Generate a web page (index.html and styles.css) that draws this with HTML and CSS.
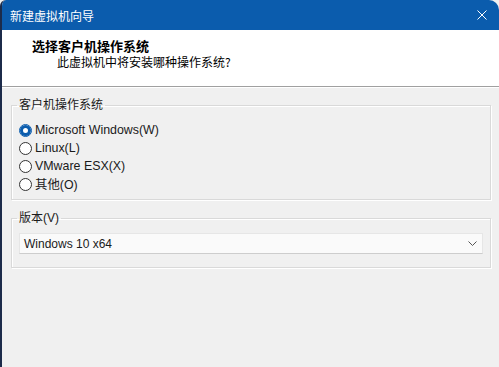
FILE: index.html
```html
<!DOCTYPE html>
<html lang="zh-CN">
<head>
    <meta charset="UTF-8">
    <meta name="viewport" content="width=device-width, initial-scale=1.0">
    <title>新建虚拟机向导</title>
    <link rel="stylesheet" href="styles.css">
</head>
<body>
    <div class="window">
        <div class="titlebar">
            <span class="title">新建虚拟机向导</span>
            <svg class="close" width="10" height="10" viewBox="0 0 10 10">
                <path d="M0.5 0.5 L9.5 9.5 M9.5 0.5 L0.5 9.5" stroke="#fff" stroke-width="1" fill="none"/>
            </svg>
        </div>

        <div class="header">
            <div class="header-title">选择客户机操作系统</div>
            <div class="header-sub">此虚拟机中将安装哪种操作系统?</div>
        </div>

        <div class="content">
            <fieldset class="group">
                <legend>客户机操作系统</legend>
                <label class="radio-row">
                    <span class="radio checked"></span>
                    <span>Microsoft Windows(W)</span>
                </label>
                <label class="radio-row">
                    <span class="radio"></span>
                    <span>Linux(L)</span>
                </label>
                <label class="radio-row">
                    <span class="radio"></span>
                    <span>VMware ESX(X)</span>
                </label>
                <label class="radio-row">
                    <span class="radio"></span>
                    <span>其他(O)</span>
                </label>
            </fieldset>

            <fieldset class="group version">
                <legend>版本(V)</legend>
                <div class="select">
                    <span>Windows 10 x64</span>
                    <svg width="9" height="5" viewBox="0 0 9 5">
                        <polyline points="0.5,0.5 4.5,4.5 8.5,0.5" stroke="#555" stroke-width="1" fill="none"/>
                    </svg>
                </div>
            </fieldset>
        </div>
    </div>
</body>
</html>
```

FILE: styles.css
```css
html, body {
    margin: 0;
    height: 100%;
}
body {
    font-family: "Liberation Sans", "Noto Sans CJK SC", sans-serif;
    font-size: 12px;
    color: #1a1a1a;
    background-color: #f0f0f0;
    overflow: hidden;
}
.window {
    height: 367px;
    border-left: 2px solid #1c2b4a;
    border-radius: 6px 10px 0 0;
    overflow: hidden;
    background-color: #f0f0f0;
    box-sizing: border-box;
}
.titlebar {
    height: 30px;
    background-color: #0b5cad;
    display: flex;
    align-items: center;
    justify-content: space-between;
    padding: 0 12px 0 8px;
}
.title {
    color: #fff;
    font-family: "Noto Sans CJK SC", sans-serif;
    font-size: 12px;
}
.header {
    height: 57px;
    background-color: #fff;
    border-bottom: 1px solid #a0a0a0;
    box-shadow: 0 1px 0 #fff;
    padding: 7px 0 0 30px;
    box-sizing: border-box;
}
.header-title {
    font-family: "Noto Sans CJK SC", sans-serif;
    font-weight: bold;
    font-size: 13px;
    line-height: 17px;
    color: #000;
}
.header-sub {
    font-family: "Noto Sans CJK SC", sans-serif;
    font-size: 12px;
    line-height: 16px;
    margin-left: 25px;
    color: #000;
}
.content {
    padding: 10px 8px 0 9px;
}
.group {
    margin: 0 0 10px 0;
    padding: 8px 7px 6px 7px;
    border: 1px solid #d9d9d9;
    box-shadow: 1px 1px 0 #fff, inset 1px 1px 0 #fff;
}
.group legend {
    padding: 0 2px;
    margin-left: -2px;
    line-height: 16px;
    color: #1a1a1a;
}
.radio-row {
    display: flex;
    align-items: center;
    height: 18px;
    gap: 3px;
    font-size: 12.4px;
}
.radio {
    width: 11px;
    height: 11px;
    border: 1px solid #333;
    border-radius: 50%;
    background-color: #fff;
    flex-shrink: 0;
}
.radio.checked {
    border-color: #0b5cad;
    background-color: #fff;
    box-shadow: inset 0 0 0 3px #0b5cad;
}
.version {
    padding: 7px 7px 13px 7px;
}
.select {
    height: 21px;
    box-sizing: border-box;
    background-color: #fafafa;
    border: 1px solid #e6e6e6;
    border-bottom-color: #cdcdcd;
    display: flex;
    align-items: center;
    justify-content: space-between;
    padding: 0 5px 0 4px;
}
```
